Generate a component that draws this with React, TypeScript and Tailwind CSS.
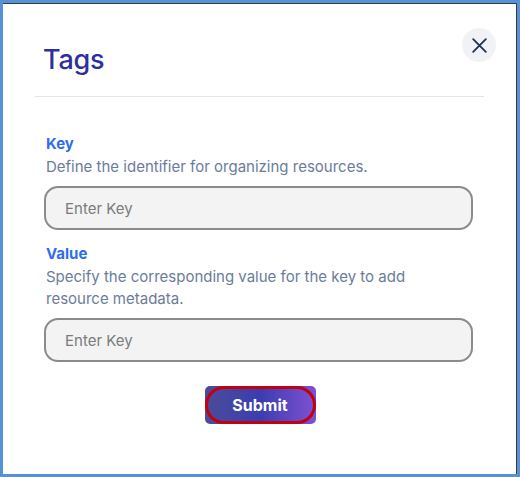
import React from 'react';

const Field = ({ label, hint }: { label: string; hint: string }) => (
  <div className="flex flex-col">
    <label className="pl-[2px] text-[15px] leading-[22px] font-bold text-[#2f6cf0]">{label}</label>
    <p className="pl-[2px] mt-[1px] text-[15px] leading-[22px] text-[#6a7c9a] pr-10">{hint}</p>
    <input
      placeholder="Enter Key"
      className="mt-[8px] h-[44px] w-full rounded-[14px] border-2 border-[#8b8b8b] bg-[#f3f3f3] px-[19px] text-[15px] text-[#444] placeholder:text-[#7b7b7b] outline-none"
    />
  </div>
);

const App: React.FC = () => {
  return (
    <div
      className="w-[520px] h-[477px] border-[3px] border-[#5592d8] bg-white"
      style={{ fontFamily: 'Inter, "Noto Sans", sans-serif' }}
    >
      <div className="h-full border-t border-r border-[#3c3c3c] px-8">
        {/* header */}
        <div className="flex items-start justify-between pt-[24px] pb-[16px] border-b border-[#e3e3ea]">
          <h1 className="pl-2 pt-[14px] pb-[2px] text-[27px] leading-[36px] font-medium text-[#2d2f9e] tracking-[-0.2px]">Tags</h1>
          <button className="-mr-3 w-[34px] h-[34px] rounded-full bg-[#f1f2f5] flex items-center justify-center text-[#1e3158]">
            <svg width="19" height="19" viewBox="0 0 24 24" fill="none" stroke="currentColor" strokeWidth="2.3" strokeLinecap="round">
              <path d="M4 4l16 16M20 4L4 20" />
            </svg>
          </button>
        </div>

        {/* form */}
        <div className="px-[9px] pr-[11px] pt-[36px] flex flex-col gap-[13px]">
          <Field label="Key" hint="Define the identifier for organizing resources." />
          <Field label="Value" hint="Specify the corresponding value for the key to add resource metadata." />
        </div>

        <div className="flex justify-center pt-[24px] pl-[1px]">
          <button className="relative w-[111px] h-[38px] rounded-[5px] bg-gradient-to-r from-[#4c4b98] via-[#3a3db1] to-[#7f50d2] text-white text-[16px] font-bold">
            <span className="absolute inset-0 rounded-full border-[3px] border-[#c2000e]" />
            <span className="relative">Submit</span>
          </button>
        </div>
      </div>
    </div>
  );
};

export default App;
